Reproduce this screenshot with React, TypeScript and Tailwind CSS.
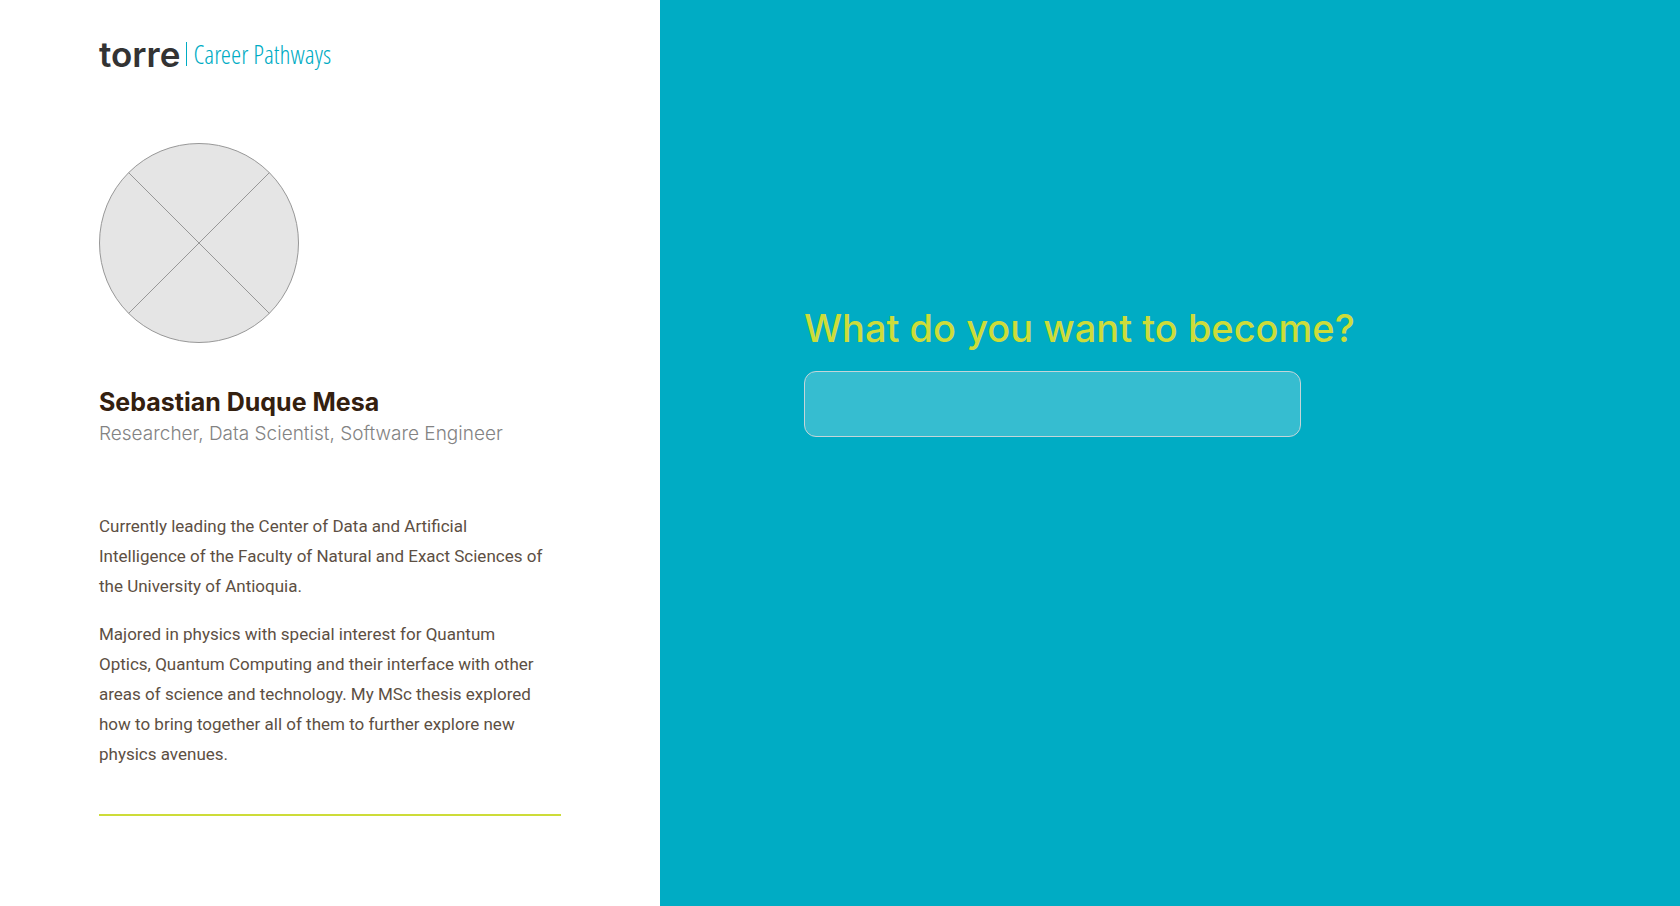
export default function App() {
  return (
    <div className="grid min-h-screen grid-cols-[11fr_17fr] font-['Roboto',sans-serif]">
      <aside className="bg-white px-[99px] pt-9">
        <header className="flex h-9 items-center">
          <a href="/" className="flex items-center" aria-label="torre Career Pathways">
            <span className="font-['Inter',sans-serif] text-[35px] leading-9 font-semibold text-[#333333]">torre</span>
            <span className="mx-1.5 h-6 w-px bg-[#00acc4]" />
            <span className="font-['Open_Sans_Condensed_Light','Roboto_Condensed','Roboto',sans-serif] text-[26px] leading-9 font-light text-[#00acc4]">Career Pathways</span>
          </a>
        </header>
        <svg className="mt-[71px] size-[200px]" viewBox="0 0 200 200" role="img" aria-label="Profile picture">
          <circle cx="100" cy="100" r="99.5" fill="#e5e5e5" stroke="#979797" />
          <path d="M29.5 29.5l141 141M170.5 29.5l-141 141" stroke="#979797" />
        </svg>
        <h1 className="mt-[43px] font-['Inter',sans-serif] text-[25px] leading-8 font-bold text-[#34200f]">Sebastian Duque Mesa</h1>
        <p className="font-['Inter',sans-serif] text-[19px] leading-8 font-light text-[#838383]">Researcher, Data Scientist, Software Engineer</p>
        <div className="mt-[61px] space-y-[18px] pr-3 text-[17px] leading-[30px] text-[#5d4f43]">
          <p>Currently leading the Center of Data and Artificial Intelligence of the Faculty of Natural and Exact Sciences of the University of Antioquia.</p>
          <p>Majored in physics with special interest for Quantum Optics, Quantum Computing and their interface with other areas of science and technology. My MSc thesis explored how to bring together all of them to further explore new physics avenues.</p>
        </div>
        <hr className="mt-[45px] border-t-2 border-[#cddc39]" />
      </aside>
      <main className="bg-[#00acc4] pt-[300px] pl-36">
        <label htmlFor="goal" className="block font-['Inter',sans-serif] text-[38px] leading-[56px] font-medium text-[#cddc39]">What do you want to become?</label>
        <input id="goal" type="text" className="mt-[15px] block h-[66px] w-[497px] rounded-xl border border-[#c4d5d9] bg-[#36bdd0] px-4 text-2xl text-white outline-none" />
      </main>
    </div>
  );
}
